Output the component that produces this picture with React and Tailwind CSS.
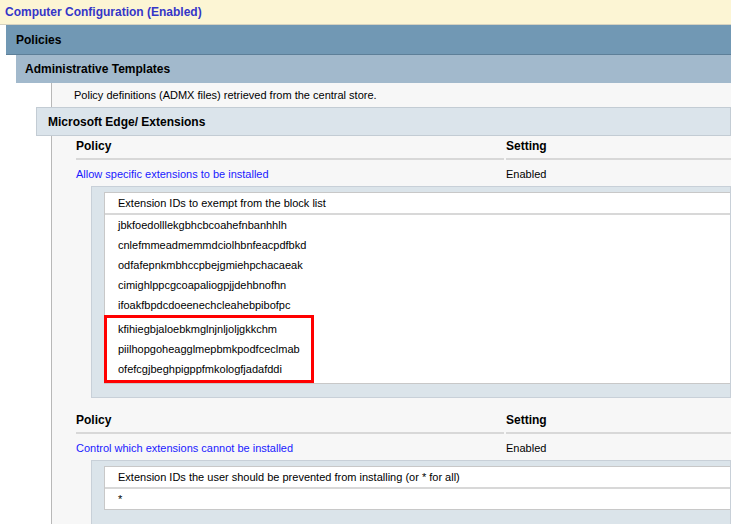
const first = [
  "jbkfoedolllekgbhcbcoahefnbanhhlh",
  "cnlefmmeadmemmdciolhbnfeacpdfbkd",
  "odfafepnkmbhccpbejgmiehpchacaeak",
  "cimighlppcgcoapaliogpjjdehbnofhn",
  "ifoakfbpdcdoeenechcleahebpibofpc",
];
const marked = [
  "kfihiegbjaloebkmglnjnljoljgkkchm",
  "piilhopgoheagglmepbmkpodfceclmab",
  "ofefcgjbeghpigppfmkologfjadafddi",
];

const Row = ({ children }) => (
  <div className="h-5 flex items-center px-[13px]">{children}</div>
);

const PolicyHeader = () => (
  <div className="flex h-[22px] items-end pb-[2px] font-bold text-[12px]">
    <div className="w-[428px] border-b-2 border-[#d8d8d8] h-full flex items-end pb-[3px] mr-[2px]">Policy</div>
    <div className="flex-1 border-b-2 border-[#d8d8d8] h-full flex items-end pb-[3px]">Setting</div>
  </div>
);

export default function App() {
  return (
    <div className="w-[731px] h-[524px] overflow-hidden bg-white text-[11px] text-black" style={{ fontFamily: "Tahoma, 'Liberation Sans', sans-serif" }}>
      <div className="h-[25px] bg-[#fcf5d4] border-b border-[#d6d2c0] flex items-center px-[5px] font-bold text-[12px] text-[#3535c8]">
        Computer Configuration (Enabled)
      </div>
      <div className="ml-[6px] h-[30px] bg-[#7198b4] border-b border-[#5d7f98] flex items-center px-[10px] font-bold text-[12px]">
        Policies
      </div>
      <div className="ml-[16px] h-[28px] bg-[#a2b9cc] flex items-center px-[9px] font-bold text-[12px]">
        Administrative Templates
      </div>
      <div className="ml-[51px] border-l border-[#b8b8b8] bg-[#f7f7f7] h-[24px] flex items-center pl-[22px]">
        Policy definitions (ADMX files) retrieved from the central store.
      </div>
      <div className="ml-[36px] h-[29px] bg-[#dbe4eb] border border-[#c3ccd4] flex items-center px-[11px] font-bold text-[12px]">
        Microsoft Edge/ Extensions
      </div>
      <div className="ml-[51px] border-l border-[#b8b8b8] bg-[#f7f7f7] pl-[24px] pt-[4px] h-[400px]">
        <PolicyHeader />
        <div className="flex h-[24px] items-center">
          <div className="w-[430px] text-[#1a1aff]">Allow specific extensions to be installed</div>
          <div>Enabled</div>
        </div>
        <div className="ml-[15px] bg-[#dbe4ea] border border-[#c8d0d8] pt-[5px] pb-[13px] pl-[12px]">
          <div className="bg-white border border-[#c8c8c8] border-r-0">
            <div className="h-[22px] flex items-center px-[13px] border-b-2 border-[#d8d8d8]">Extension IDs to exempt from the block list</div>
            {first.map((s) => <Row key={s}>{s}</Row>)}
            <div className="w-[210px] border-[3px] border-[#ff0000] -ml-[1px] py-[1px]">
              {marked.map((s) => (
                <div key={s} className="h-5 flex items-center px-[11px]">{s}</div>
              ))}
            </div>
          </div>
        </div>
        <div className="h-[16px]" />
        <PolicyHeader />
        <div className="flex h-[24px] items-center">
          <div className="w-[430px] text-[#1a1aff]">Control which extensions cannot be installed</div>
          <div>Enabled</div>
        </div>
        <div className="ml-[15px] bg-[#dbe4ea] border border-[#c8d0d8] pt-[5px] pb-[15px] pl-[12px]">
          <div className="bg-white border border-[#c8c8c8] border-r-0">
            <div className="h-[22px] flex items-center px-[13px] border-b-2 border-[#d8d8d8]">Extension IDs the user should be prevented from installing (or * for all)</div>
            <Row>*</Row>
          </div>
        </div>
      </div>
    </div>
  );
}
